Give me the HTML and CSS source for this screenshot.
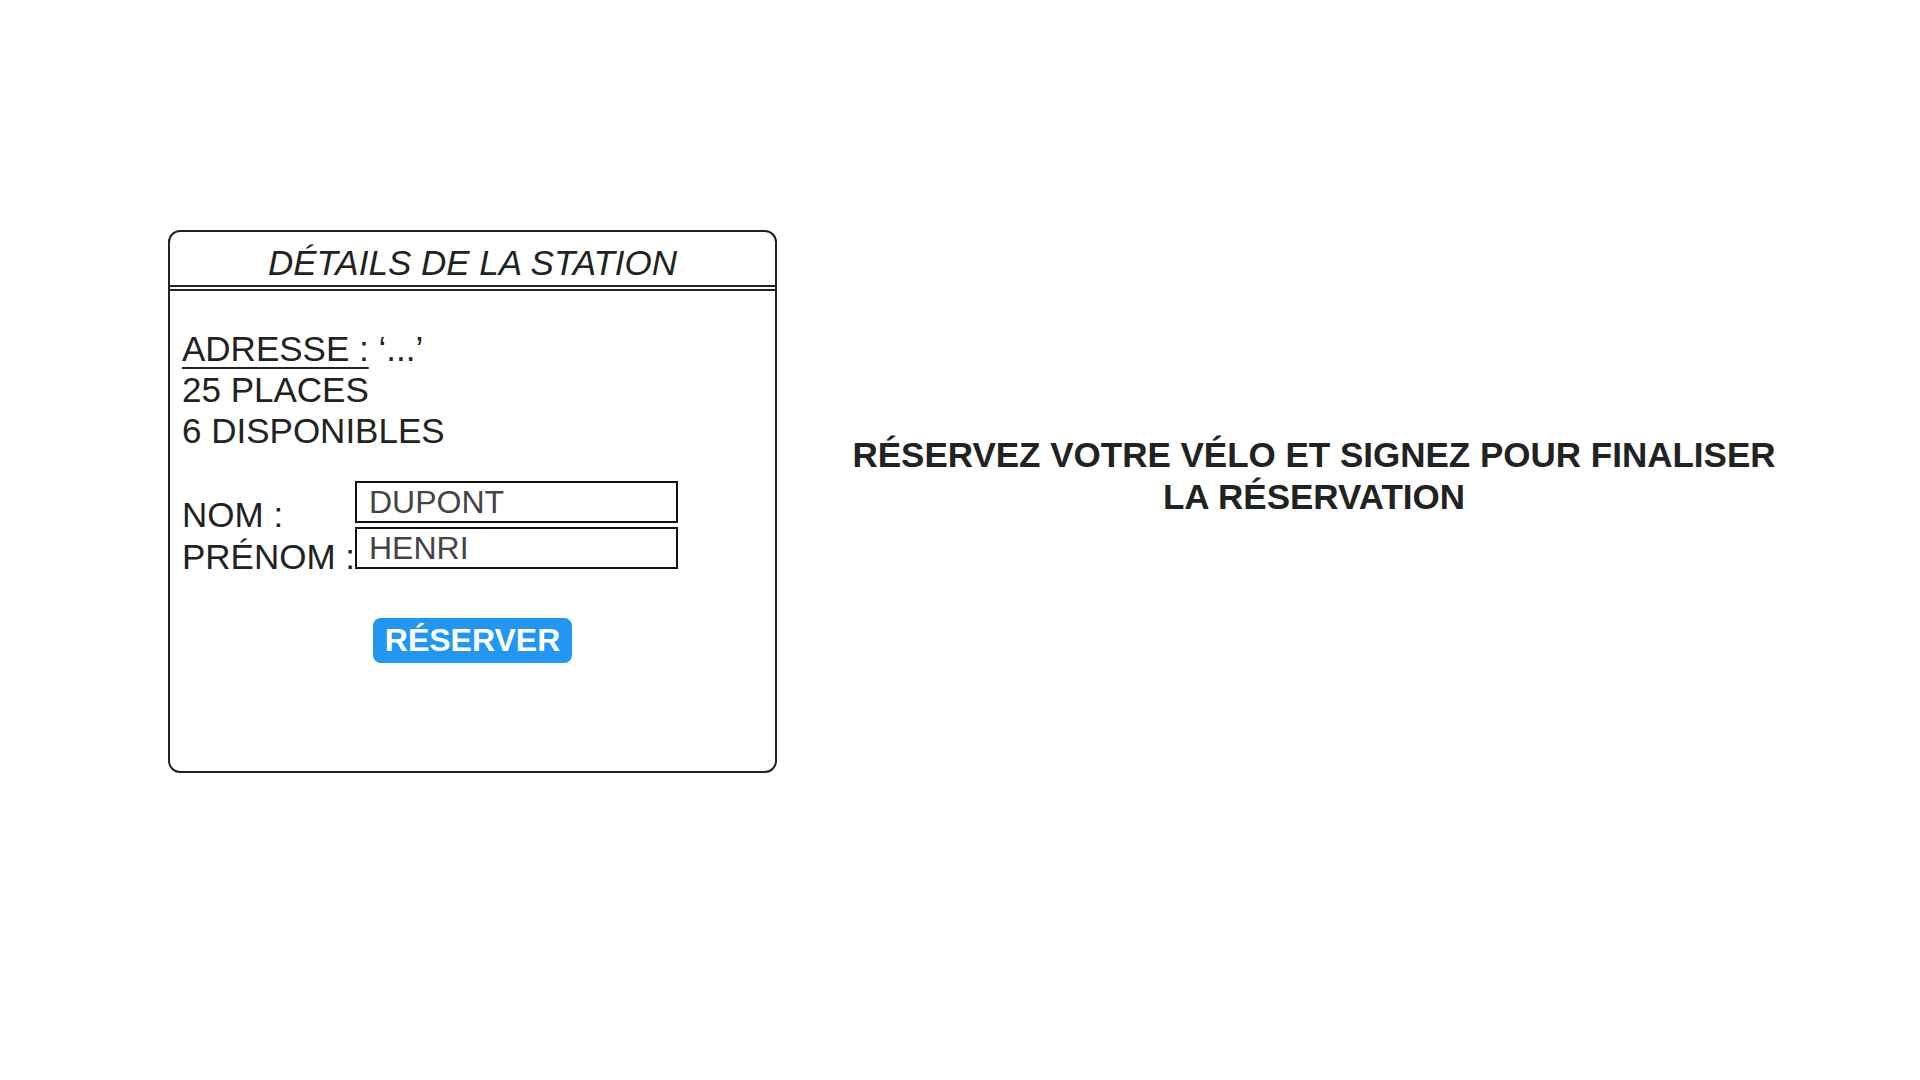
FILE: index.html
```html
<!DOCTYPE html>
<html lang="fr">
<head>
<meta charset="utf-8">
<title>Réservation</title>
<link rel="stylesheet" href="styles.css">
</head>
<body>
<main class="page">
  <section class="card">
    <header class="card-header">
      <h1 class="card-title">DÉTAILS DE LA STATION</h1>
    </header>
    <div class="card-body">
      <p class="info"><span class="info-label">ADRESSE :</span> ‘...’</p>
      <p class="info">25 PLACES</p>
      <p class="info">6 DISPONIBLES</p>
      <form class="form">
        <div class="labels">
          <label for="nom">NOM :</label>
          <label for="prenom">PRÉNOM :</label>
        </div>
        <div class="fields">
          <input id="nom" class="field" type="text" value="DUPONT">
          <input id="prenom" class="field" type="text" value="HENRI">
        </div>
      </form>
      <div class="actions">
        <button class="btn" type="button">RÉSERVER</button>
      </div>
    </div>
  </section>
  <section class="message">
    <p class="message-text">RÉSERVEZ VOTRE VÉLO ET SIGNEZ POUR FINALISER<br>LA RÉSERVATION</p>
  </section>
</main>
</body>
</html>
```
FILE: styles.css
```css
* { box-sizing: border-box; }
html, body { margin: 0; padding: 0; background: #fff; }
body {
  font-family: "Liberation Sans", Arial, sans-serif;
  color: #222;
  width: 1920px;
  height: 1080px;
  overflow: hidden;
}
.page {
  display: flex;
  align-items: flex-start;
  padding: 230px 69px 0 168px;
}
.card {
  width: 609px;
  height: 543px;
  border: 2px solid #222;
  border-radius: 12px;
  flex: none;
}
.card-header {
  padding: 11px 0 2px;
  border-bottom: 6px double #222;
}
.card-title {
  margin: 0;
  font-size: 35px;
  line-height: 40px;
  font-style: italic;
  font-weight: normal;
  text-align: center;
  color: #222;
}
.card-body {
  padding: 37px 12px 0;
}
.info {
  margin: 0;
  font-size: 35px;
  line-height: 41px;
}
.info-label {
  text-decoration: underline;
  text-decoration-thickness: 2px;
  text-underline-offset: 6px;
}
.form {
  display: flex;
  align-items: flex-start;
  margin-top: 30px;
}
.labels {
  display: flex;
  flex-direction: column;
  width: 173px;
  padding-top: 13px;
  font-size: 35px;
  line-height: 42px;
  white-space: nowrap;
}
.fields {
  display: flex;
  flex-direction: column;
  gap: 4px;
}
.field {
  width: 323px;
  height: 42px;
  margin: 0;
  border: 2px solid #111;
  border-radius: 0;
  padding: 0 12px;
  font-family: "Liberation Sans", Arial, sans-serif;
  font-size: 32px;
  color: #444;
  background: #fff;
  outline: none;
}
.actions {
  display: flex;
  justify-content: center;
  margin-top: 40px;
}
.btn {
  height: 45px;
  padding: 0 12px;
  border: none;
  border-radius: 8px;
  background: #2196f3;
  color: #fff;
  font-family: "Liberation Sans", Arial, sans-serif;
  font-weight: bold;
  font-size: 32px;
  line-height: 45px;
  cursor: pointer;
}
.message {
  flex: 1;
  padding-top: 204px;
}
.message-text {
  margin: 0;
  text-align: center;
  font-weight: bold;
  font-size: 35px;
  line-height: 42px;
  color: #222;
}
```
